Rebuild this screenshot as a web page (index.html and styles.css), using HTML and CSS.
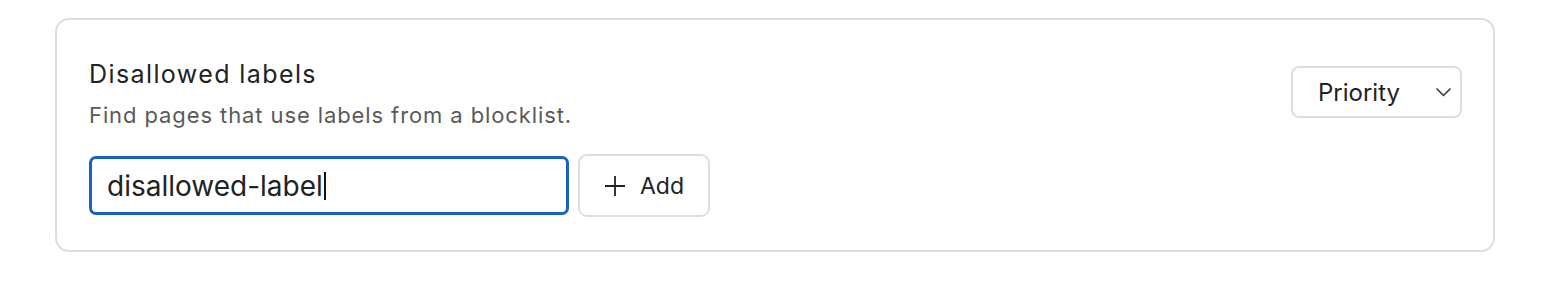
FILE: index.html
```html
<!DOCTYPE html>
<html>
<head>
<meta charset="utf-8">
<link rel="stylesheet" href="styles.css">
</head>
<body>
<div class="page">
  <section class="card">
    <div class="main">
      <h2 class="title">Disallowed labels</h2>
      <p class="desc">Find pages that use labels from a blocklist.</p>
      <div class="row">
        <div class="input"><span>disallowed-label</span><span class="caret"></span></div>
        <button class="add">
          <svg width="22" height="22" viewBox="0 0 22 22"><path d="M11 1v20M1 11h20" stroke="#222" stroke-width="1.8" fill="none"/></svg>
          <span>Add</span>
        </button>
      </div>
    </div>
    <div class="select">
      <span>Priority</span>
      <svg width="17" height="10" viewBox="0 0 17 10"><path d="M1.5 1.5l7 7 7-7" stroke="#333" stroke-width="1.5" fill="none"/></svg>
    </div>
  </section>
</div>
</body>
</html>
```
FILE: styles.css
```css
* { box-sizing: border-box; }
html, body { margin: 0; padding: 0; background: #fff; }
body { font-family: Inter, "Noto Sans", sans-serif; color: #222; }
.page { padding: 18px 60px 0 55px; }
.card {
  width: 1440px;
  height: 234px;
  border: 2px solid #dedede;
  border-radius: 14px;
  padding: 38px 31px 0 32px;
  display: flex;
  justify-content: space-between;
  align-items: flex-start;
}
.title { margin: 0; font-size: 25px; font-weight: 400; line-height: 32px; color: #222; letter-spacing: 1.4px; }
.desc { margin: 11px 0 0; font-size: 22px; line-height: 28px; color: #5a5a5a; letter-spacing: 0.9px; }
.row { display: flex; gap: 9px; align-items: center; margin-top: 25px; }
.input {
  width: 480px; height: 59px;
  border: 3px solid #1a62c0;
  border-radius: 7px;
  padding: 0 15px;
  display: flex; align-items: center;
  font-size: 28px; color: #222;
}
.caret { display: inline-block; width: 2px; height: 28px; background: #111; margin-left: 1px; }
.add {
  width: 132px; height: 63px;
  border: 2px solid #dedede;
  border-radius: 9px;
  background: #fff;
  display: flex; align-items: center; justify-content: center; gap: 14px;
  font-family: inherit; font-size: 23px; color: #222;
  padding: 0;
}
.select {
  margin-top: 8px;
  width: 171px; height: 52px;
  border: 2px solid #dedede;
  border-radius: 8px;
  display: flex; align-items: center; justify-content: space-between;
  padding: 0 8px 0 25px;
  font-size: 24px; color: #222;
}
```
